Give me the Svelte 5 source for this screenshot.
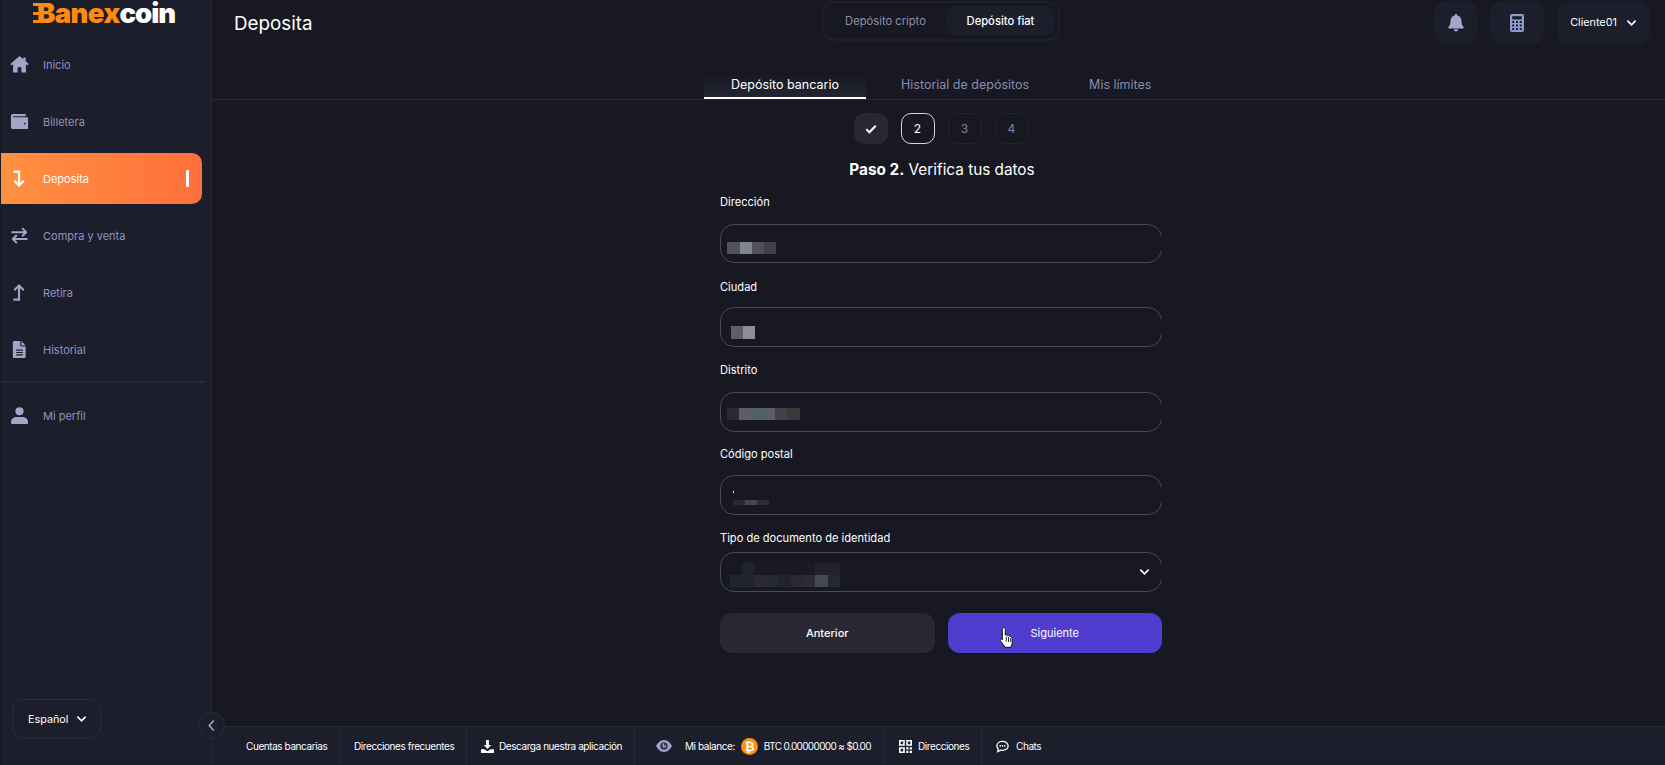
<script>
  const nav = [
    { id: 'home', label: 'Inicio' },
    { id: 'wallet', label: 'Billetera' },
    { id: 'down', label: 'Deposita', active: true },
    { id: 'swap', label: 'Compra y venta' },
    { id: 'up', label: 'Retira' },
    { id: 'file', label: 'Historial' }
  ];
  const fields = [
    { cls: 'f1', label: 'Dirección', blur: [['#51515b', 13], ['#7f868c', 12], ['#52515b', 12], ['#41414b', 12]] },
    { cls: 'f2', label: 'Ciudad', blur: [['#5f5e69', 12], ['#8f8c98', 12]] },
    { cls: 'f3', label: 'Distrito', blur: [['#292a36', 12], ['#5d5c69', 12], ['#50606a', 12], ['#5b5d68', 12], ['#41404c', 12], ['#3c3838', 13]] },
    { cls: 'f4', label: 'Código postal', dot: true, blur: [['#292a36', 12], ['#45454f', 12], ['#2c2c37', 12]] }
  ];
  const selBlur = [['#1f2531', 12], ['#20232f', 12], ['#2a2a35', 13], ['#222a36', 12], ['#23232e', 12], ['#2a2931', 12], ['#2b2c38', 12], ['#484850', 13], ['#232834', 12]];
</script>

<div class="app">
  <aside class="side">
    <div class="logo"><span class="prongs"><i></i><i></i><i></i></span><span class="or">Banex</span><span class="wh">coin</span></div>
    <nav class="nav">
      {#each nav as n}
        <div class="item" class:active={n.active}>
          <svg class="ic" viewBox="0 0 20 20" fill="currentColor">
            {#if n.id === 'home'}
              <path d="M10 1 14 4.500V2.500H16.500V6.700L19.700 9.500 18.300 11 16.800 9.800V18.500H12V13H8V18.500H3.200V9.800L1.700 11 .3 9.500z"/>
            {:else if n.id === 'wallet'}
              <path d="M3 2h13.500v2.400H3.600c-.5 0-.5 1 0 1H18c.6 0 1 .4 1 1V17c0 .6-.4 1-1 1H3c-1 0-2-.9-2-2V4c0-1.100.9-2 2-2zm12.500 9.300a.9.9 0 1 0 0 1.800.9.9 0 0 0 0-1.800z"/>
            {:else if n.id === 'down'}
              <path d="M3.500 2.700H9.500V17M4.500 12.300 9.500 17.300 14.500 12.300" fill="none" stroke="currentColor" stroke-width="2.400"/>
            {:else if n.id === 'swap'}
              <path d="M1.500 6.500H17M12.800 2.200 17 6.500 12.800 10.800M18.500 13.700H3M7.200 9.400 3 13.700 7.200 18" fill="none" stroke="currentColor" stroke-width="2.100"/>
            {:else if n.id === 'up'}
              <path d="M3.500 17.500H9.500V3M4.500 7.700 9.500 2.700 14.500 7.700" fill="none" stroke="currentColor" stroke-width="2.200"/>
            {:else if n.id === 'file'}
              <path d="M4.500 1h6.300v5c0 .5.4.9.9.9h4.800V17.500c0 .8-.7 1.500-1.500 1.500H4.500C3.700 19 3 18.300 3 17.500v-15C3 1.700 3.700 1 4.500 1zM12 1l4.500 4.700H12zM6.500 10v1.200h7V10zm0 2.500v1.200h7v-1.200zm0 2.500v1.200h7V15z" fill-rule="evenodd"/>
            {/if}
          </svg>
          <span>{n.label}</span>
          {#if n.active}<b class="bar"></b>{/if}
        </div>
      {/each}
    </nav>
    <div class="rule"></div>
    <div class="item profile">
      <svg class="ic" viewBox="0 0 20 20" fill="currentColor"><circle cx="10" cy="5.500" r="4.300"/><path d="M6.500 11.500h7c3 0 5.500 2.500 5.500 5.500v.5c0 .8-.7 1.500-1.500 1.500h-15C1.700 19 1 18.300 1 17.500V17c0-3 2.500-5.500 5.500-5.500z"/></svg>
      <span>Mi perfil</span>
    </div>
    <div class="lang">
      <span>Español</span>
      <svg class="chev" viewBox="0 0 12 8"><path d="M1.500 1.500 6 6l4.500-4.500" /></svg>
    </div>
    <button class="collapse" aria-label="Colapsar">
      <svg viewBox="0 0 10 14"><path d="M7.500 1.500 2.500 7l5 5.500" /></svg>
    </button>
  </aside>

  <main class="main">
    <header class="head">
      <div class="top">
        <h1>Deposita</h1>
        <div class="seg">
          <span class="opt">Depósito cripto</span>
          <span class="opt on">Depósito fiat</span>
        </div>
        <div class="tools">
          <div class="tool bell">
            <svg viewBox="0 0 16 18" fill="currentColor"><path d="M8 0a1.300 1.300 0 0 1 1.300 1.400C12 2 13.500 4.200 13.500 7c0 3.600 1 4.800 2.100 6 .4.500.1 1.400-.7 1.400H1.100c-.8 0-1.100-.9-.7-1.400C1.500 11.800 2.500 10.600 2.500 7c0-2.800 1.500-5 4.200-5.600A1.300 1.300 0 0 1 8 0zM6 15.300h4A2 2 0 0 1 8 17.500a2 2 0 0 1-2-2.200z"/></svg>
          </div>
          <div class="tool calc">
            <svg viewBox="0 0 14 18"><rect width="14" height="18" rx="2" fill="currentColor"/><rect x="2.200" y="2.200" width="9.600" height="3.300" fill="#1c1e2b"/><g fill="#1c1e2b"><rect x="2.200" y="7" width="2" height="2"/><rect x="6" y="7" width="2" height="2"/><rect x="9.800" y="7" width="2" height="2"/><rect x="2.200" y="10.500" width="2" height="2"/><rect x="6" y="10.500" width="2" height="2"/><rect x="9.800" y="10.500" width="2" height="2"/><rect x="2.200" y="14" width="2" height="2"/><rect x="6" y="14" width="2" height="2"/><rect x="9.800" y="14" width="2" height="2"/></g></svg>
          </div>
          <div class="tool user">
            <span>Cliente01</span>
            <svg class="chev" viewBox="0 0 12 8"><path d="M1.500 1.500 6 6l4.500-4.500" /></svg>
          </div>
        </div>
      </div>
      <div class="tabs">
        <span class="tab on">Depósito bancario</span>
        <span class="tab t2">Historial de depósitos</span>
        <span class="tab t3">Mis límites</span>
      </div>
    </header>

    <section class="content">
      <div class="steps">
        <span class="step done"><svg viewBox="0 0 12 10"><path d="M1.300 5.300 4.400 8.300 10.700 1.700" /></svg></span>
        <span class="step cur">2</span>
        <span class="step">3</span>
        <span class="step">4</span>
      </div>
      <h2><strong>Paso 2.</strong> Verifica tus datos</h2>
      <form class="form">
        {#each fields as f}
          <div class="field {f.cls}">
            <span class="lab">{f.label}</span>
            <div class="box">
              {#if f.dot}<u class="dot"></u>{/if}
              {#each f.blur as b}<i style="background:{b[0]};width:{b[1]}px"></i>{/each}
            </div>
          </div>
        {/each}
        <div class="field f5">
          <span class="lab">Tipo de documento de identidad</span>
          <div class="box sel">
            <div class="blur2">
              <div class="r1"></div>
              <div class="r2">{#each selBlur as b}<i style="background:{b[0]};width:{b[1]}px"></i>{/each}</div>
            </div>
            <svg class="chev" viewBox="0 0 12 8"><path d="M1.500 1.500 6 6l4.500-4.500" /></svg>
          </div>
        </div>
        <div class="btns">
          <button type="button" class="btn prev">Anterior</button>
          <button type="button" class="btn next">Siguiente
            <svg class="hand" viewBox="0 0 16 21"><path d="M4.800.7c.9 0 1.500.7 1.500 1.600V8l.9-.3c.9 0 1.300.4 1.500 1 .8-.4 1.700-.1 2 .7.900-.3 1.900.1 2.100 1 .5 1 .6 3 .5 4.600-.1 2.300-.9 3.700-1.300 5.300H6c-.7-1.700-2.600-3.800-4.700-6.600-.7-1 .3-2.300 1.400-1.600l.6.700V2.300c0-.9.600-1.600 1.500-1.600z" fill="#fff" stroke="#111" stroke-width="1"/><path d="M7.300 9.500v5M9.500 10v5M11.700 11v4" stroke="#111" stroke-width=".9"/></svg>
          </button>
        </div>
      </form>
    </section>

    <footer class="foot">
      <div class="fi a">Cuentas bancarias</div>
      <div class="fi b">Direcciones frecuentes</div>
      <div class="fi c">
        <svg class="fic" viewBox="0 0 14 14" fill="currentColor"><path d="M5.500 0h3v5.500h2.500L7 9.800 3 5.500h2.500zM0 10h3.500L7 12l3.500-2H14v4H0z"/></svg>
        Descarga nuestra aplicación
      </div>
      <div class="fi d">
        <svg class="eye" viewBox="0 0 16 12" fill="#a2a3c6"><path d="M8 0c3.600 0 6.300 3 8 6-1.700 3-4.400 6-8 6S1.700 9 0 6c1.700-3 4.400-6 8-6z"/><circle cx="8" cy="6" r="3.800" fill="#3a3b57"/><path d="M7.500 3.500v3h2.500" stroke="#a2a3c6" fill="none" stroke-width="1.300"/></svg>
        <span class="bal">Mi balance:</span>
        <svg class="btc" viewBox="0 0 17 17"><circle cx="8.500" cy="8.500" r="8.500" fill="#f7931a"/><text x="8.500" y="12.700" text-anchor="middle" font-size="12" font-weight="700" fill="#fff" font-family="DejaVu Sans, sans-serif">₿</text></svg>
        <span class="amt">BTC 0.00000000 ≈ $0.00</span>
      </div>
      <div class="fi e">
        <svg class="fic qr" viewBox="0 0 13 13" fill="currentColor" fill-rule="evenodd"><path d="M0 0h5.800v5.800H0zM1.600 1.600v2.600h2.600V1.600zM7.200 0H13v5.800H7.200zM8.800 1.600v2.600h2.600V1.600zM0 7.200h5.800V13H0zM1.600 8.800v2.600h2.600V8.800zM7.200 7.200h2.300v2.300H7.200zM10.700 7.200H13v2.300h-2.300zM7.200 10.700h2.300V13H7.200zM10.700 10.700H13V13h-2.300z"/></svg>
        Direcciones
      </div>
      <div class="fi f">
        <svg class="fic" viewBox="0 0 14 13"><path d="M7 1C3.500 1 .9 3 .9 5.800c0 1.300.6 2.500 1.600 3.300L1.800 12l3.300-1.600c.6.100 1.300.2 1.900.2 3.500 0 6.100-2 6.100-4.800S10.500 1 7 1z" fill="none" stroke="currentColor" stroke-width="1.400"/><circle cx="4.500" cy="5.800" r=".9" fill="currentColor"/><circle cx="7" cy="5.800" r=".9" fill="currentColor"/><circle cx="9.500" cy="5.800" r=".9" fill="currentColor"/></svg>
        Chats
      </div>
    </footer>
  </main>
</div>

<style>
  :global(body) { margin: 0; background: #171822; }
  .app {
    display: flex; width: 1665px; height: 765px; overflow: hidden; background: #171822;
    font-family: Inter, "Noto Sans", sans-serif; color: #fff;
  }
  .side {
    position: relative; flex: 0 0 212px; box-sizing: border-box; width: 212px; height: 765px;
    background: #1c1e2b; border-left: 1px solid #171822; border-right: 1px solid #262835;
    display: flex; flex-direction: column;
  }
  .logo {
    position: relative; height: 36px; padding-left: 36px;
    font-family: Inter, sans-serif; font-weight: 900; font-size: 27.500px; line-height: 26px; letter-spacing: -.6px;
    white-space: nowrap;
  }
  .or { color: #ff8a12; }
  .wh { color: #fff; letter-spacing: -1.100px; }
  .prongs { position: absolute; left: 32px; top: 3px; height: 20px; display: flex; flex-direction: column; justify-content: space-between; }
  .prongs i { display: block; width: 7px; height: 3px; background: #ff8a12; }
  .nav { display: flex; flex-direction: column; padding-top: 3px; }
  .item {
    display: flex; align-items: center; height: 51px; margin-bottom: 6px; width: 201px; box-sizing: border-box;
    padding-left: 9px; font-size: 11px; color: #8e92c4; position: relative;
  }
  .ic { width: 19px; height: 19px; color: #a3a4c6; margin-right: 14px; flex: none; }
  .item.active {
    background: linear-gradient(90deg, #ff9040, #ff703c); color: #fff;
    border-radius: 0 10px 10px 0;
  }
  .item.active .ic { color: #fff; }
  .bar { position: absolute; left: 185px; top: 17px; width: 3px; height: 17px; background: #fff; border-radius: 1px; }
  .rule { height: 2px; width: 204px; background: #262835; }
  .profile { margin-top: 7px; margin-bottom: 0; }
  .lang {
    position: absolute; left: 11px; top: 699px; width: 89px; height: 40px; box-sizing: border-box;
    border: 1px solid #2a2c3a; border-radius: 12px; display: flex; align-items: center; padding-left: 15px;
    font-size: 10.800px; color: #fff;
  }
  .chev { width: 11px; height: 8px; fill: none; stroke: #fff; stroke-width: 1.800; flex: none; }
  .lang .chev { margin-left: 8px; }
  .collapse {
    position: absolute; z-index: 2; left: 197px; top: 712px; width: 27px; height: 27px; padding: 0;
    background: #1c1e2b; border: 1px solid #2a2c3a; border-radius: 50%; display: flex; align-items: center; justify-content: center;
  }
  .collapse svg { width: 9px; height: 13px; fill: none; stroke: #a3a4c6; stroke-width: 1.800; }

  .main { flex: 1; display: flex; flex-direction: column; min-width: 0; }
  .head { height: 100px; box-sizing: border-box; border-bottom: 1px solid #262835; position: relative; }
  .top { position: relative; height: 44px; }
  h1 { margin: 0; position: absolute; left: 22px; top: 10px; font-size: 18.800px; line-height: 28px; font-weight: 400; }
  .seg {
    position: absolute; left: 610px; top: 1px; width: 238px; height: 40px; box-sizing: border-box;
    border: 2px solid #1d1f2c; border-radius: 12px; display: flex; align-items: center; font-size: 11.200px;
  }
  .opt { width: 123px; text-align: center; color: #8d8fa8; }
  .opt.on { width: 107px; height: 30px; line-height: 30px; background: #1c1e2b; border-radius: 10px; color: #fff; font-weight: 500; }
  .tools { position: absolute; left: 1222px; top: 0; display: flex; gap: 13px; height: 44px; }
  .tool { background: #1c1e2b; border-radius: 12px; height: 43px; margin-top: 1px; display: flex; align-items: center; justify-content: center; color: #a6a7ce; }
  .bell { width: 43px; }
  .bell svg { width: 16px; height: 18px; }
  .calc { width: 54px; }
  .calc svg { width: 14px; height: 18px; color: #8f9ccb; }
  .user { width: 93px; color: #fff; font-size: 10.800px; gap: 9px; }
  .tabs { position: absolute; left: 492px; top: 70px; height: 29px; display: flex; font-size: 12.500px; }
  .tab { color: #8a8cae; line-height: 29px; white-space: nowrap; }
  .tab.on { width: 162px; box-sizing: border-box; text-align: center; color: #fff; border-bottom: 2px solid #fff; height: 29px; background: linear-gradient(180deg, #171822 10%, #232533 100%); }
  .t2 { margin-left: 35px; }
  .t3 { margin-left: 60px; }

  .content { flex: 1; display: flex; flex-direction: column; align-items: center; padding-left: 5px; position: relative; }
  .steps { display: flex; gap: 13px; margin-top: 13px; }
  .step {
    width: 34px; height: 31px; box-sizing: border-box; border: 1px solid #232532; border-radius: 10px;
    display: flex; align-items: center; justify-content: center; font-size: 12px; color: #7d80a5;
  }
  .step.done { background: #272834; border-color: #272834; }
  .step.done svg { width: 12px; height: 10px; fill: none; stroke: #fff; stroke-width: 2; }
  .step.cur { border-color: #d6d6dc; color: #fff; }
  h2 { margin: 16px 0 0 2px; font-size: 15.300px; line-height: 20px; font-weight: 400; }
  h2 strong { font-weight: 700; }
  .form { width: 442px; margin-top: 15px; display: flex; flex-direction: column; }
  .field { display: flex; flex-direction: column; }
  .lab { font-size: 11.100px; line-height: 14px; color: #fff; }
  .box {
    position: relative; box-sizing: border-box; height: 40px; border: 1px solid #474a58; border-radius: 14px;
    display: flex; align-items: center; padding-left: 6px;
  }
  .box::after { content: ""; position: absolute; right: -1px; top: 11px; bottom: 11px; width: 1px; background: #171822; }
  .box i { display: block; height: 12px; }
  .dot { position: absolute; left: 12px; top: 15px; width: 1px; height: 2px; background: #e8e8ee; }
  .f1 .box { margin-top: 15px; height: 39px; padding-top: 9px; }
  .f2 { margin-top: 17px; }
  .f2 .box { margin-top: 13px; padding: 11px 0 0 10px; }
  .f2 .box i { height: 13px; }
  .f3 { margin-top: 16px; }
  .f3 .box { margin-top: 15px; padding-top: 4px; }
  .f4 { margin-top: 15px; }
  .f4 .box { margin-top: 14px; padding: 14px 0 0 12px; }
  .f4 .box i { height: 5px; }
  .f5 { margin-top: 16px; }
  .f5 .box { margin-top: 7px; }
  .sel { justify-content: space-between; padding: 0 11px 0 0; }
  .blur2 { margin-left: 9px; padding-top: 5px; }
  .r1 { margin-left: 12px; width: 98px; height: 12px; background: linear-gradient(90deg, #21232f 0 12%, #191a25 12% 75%, #22222e 75%); }
  .r2 { display: flex; }
  .btns { display: flex; gap: 13px; margin-top: 21px; }
  .btn {
    flex: 1; height: 40px; border: 0; border-radius: 12px; color: #fff; font: 500 11px Inter, sans-serif; position: relative;
  }
  .prev { background: #272833; }
  .next { background: #513cd0; font-weight: 400; }
  .hand { position: absolute; left: 51px; top: 14px; width: 16px; height: 21px; }

  .foot {
    height: 39px; box-sizing: border-box; background: #1c1e2b; border-top: 1px solid #262835;
    display: flex; align-items: stretch; font-size: 10px; color: #fff; padding-left: 21px; margin-top: auto;
  }
  .fi { display: flex; align-items: center; box-sizing: border-box; border-right: 1px solid #262835; white-space: nowrap; letter-spacing: -.42px; }
  .a { width: 107px; padding-left: 13px; }
  .b { width: 127px; padding-left: 14px; }
  .c { width: 168px; padding-left: 14px; gap: 5px; }
  .d { width: 250px; padding-left: 21px; }
  .e { width: 97px; padding-left: 14px; gap: 6px; }
  .f { padding-left: 14px; gap: 7px; border-right: 0; }
  .fic { width: 13px; height: 13px; flex: none; }
  .eye { width: 16px; height: 12px; margin-right: 13px; flex: none; }
  .bal { margin-right: 6px; }
  .btc { width: 17px; height: 17px; margin-right: 6px; flex: none; }
  .amt { letter-spacing: -.65px; }
</style>
